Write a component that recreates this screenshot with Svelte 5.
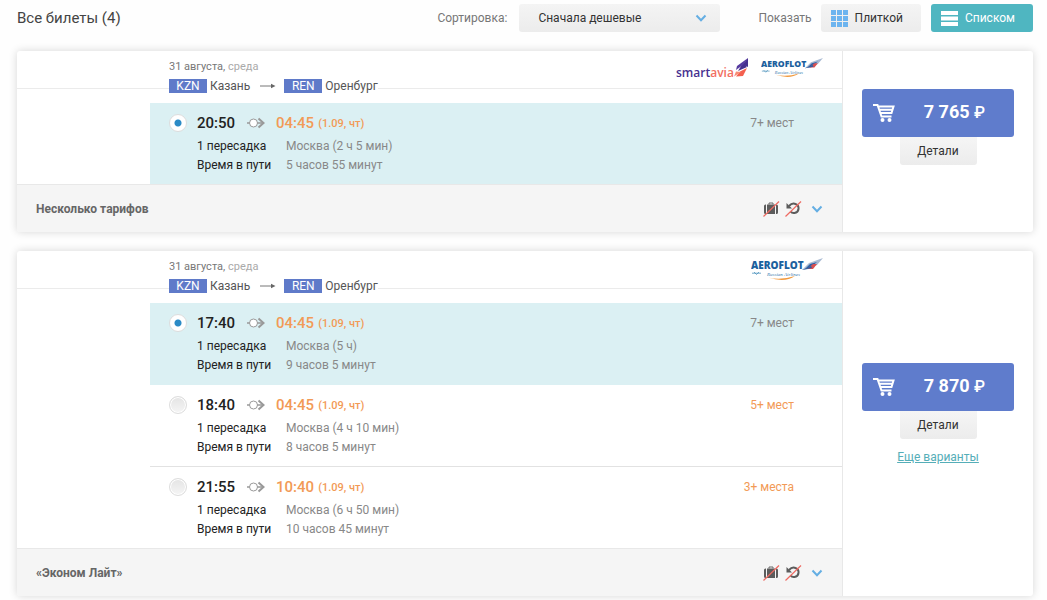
<script lang="ts">
  type Flight = {
    depart: string;
    arrive: string;
    stop: string;
    duration: string;
    seats: string;
    few?: boolean;
  };

  type Ticket = {
    id: number;
    airlines: string[];
    flights: Flight[];
    tariff: string;
    price: string;
    more?: boolean;
  };

  const tickets: Ticket[] = [
    {
      id: 1,
      airlines: ['smartavia', 'aeroflot'],
      flights: [
        { depart: '20:50', arrive: '04:45', stop: 'Москва (2 ч 5 мин)', duration: '5 часов 55 минут', seats: '7+ мест' }
      ],
      tariff: 'Несколько тарифов',
      price: '7 765'
    },
    {
      id: 2,
      airlines: ['aeroflot'],
      flights: [
        { depart: '17:40', arrive: '04:45', stop: 'Москва (5 ч)', duration: '9 часов 5 минут', seats: '7+ мест' },
        { depart: '18:40', arrive: '04:45', stop: 'Москва (4 ч 10 мин)', duration: '8 часов 5 минут', seats: '5+ мест', few: true },
        { depart: '21:55', arrive: '10:40', stop: 'Москва (6 ч 50 мин)', duration: '10 часов 45 минут', seats: '3+ места', few: true }
      ],
      tariff: '«Эконом Лайт»',
      price: '7 870',
      more: true
    }
  ];

  let selected: Record<number, number> = $state({ 1: 0, 2: 0 });
  let view = $state('list');
</script>

<div class="page">
  <header class="toolbar">
    <h1>Все билеты (4)</h1>
    <label class="caption" for="sort">Сортировка:</label>
    <div class="sort">
      <select id="sort">
        <option>Сначала дешевые</option>
        <option>Сначала быстрые</option>
      </select>
      <svg class="chevron" width="12" height="8" viewBox="0 0 12 8"><path d="M1.5 1.5 6 6.2l4.5-4.7" /></svg>
    </div>
    <span class="caption show">Показать</span>
    <button class="view" class:active={view === 'tile'} onclick={() => (view = 'tile')}>
      <svg width="17" height="17" viewBox="0 0 17 17" fill="currentColor">
        <path d="M0 0h5v5H0zM6 0h5v5H6zM12 0h5v5h-5zM0 6h5v5H0zM6 6h5v5H6zM12 6h5v5h-5zM0 12h5v5H0zM6 12h5v5H6zM12 12h5v5h-5z" />
      </svg>
      Плиткой
    </button>
    <button class="view" class:active={view === 'list'} onclick={() => (view = 'list')}>
      <svg width="17" height="17" viewBox="0 0 17 17" fill="currentColor">
        <path d="M0 1h17v4H0zM0 6.5h17v4H0zM0 12h17v4H0z" />
      </svg>
      Списком
    </button>
  </header>

  {#each tickets as ticket (ticket.id)}
    <article class="ticket">
      <div class="main">
        <div class="head">
          <div class="direction">
            <div class="date">31 августа, <span>среда</span></div>
            <div class="route">
              <b>KZN</b>Казань
              <svg width="16" height="6" viewBox="0 0 16 6"><path d="M0 3h13" stroke="#777" /><path d="M11 .8 15.5 3 11 5.2z" fill="#666" /></svg>
              <b>REN</b>Оренбург
            </div>
          </div>
          <div class="logos">
            {#each ticket.airlines as airline}
              {#if airline === 'smartavia'}
                <svg width="73" height="24" viewBox="0 0 73 24" role="img" aria-label="smartavia">
                  <text x="0" y="20" class="smart">smart<tspan fill="#f26f62">avia</tspan></text>
                  <path d="M72 1v9l-5-3zM67 6l4 4-9 4z" fill="#46308f" />
                  <path d="M72 1 61 9l-1 4 7-5z" fill="#563ba0" />
                  <path d="M71 11 67 19l-7 .5 4-5z" fill="#f4604f" />
                  <path d="m60 14.5 5 .5-7 4.5z" fill="#f88b74" />
                </svg>
              {:else}
                <svg
                  width={ticket.airlines.length > 1 ? 62 : 72}
                  height={ticket.airlines.length > 1 ? 21 : 24}
                  viewBox="0 0 72 24"
                  role="img"
                  aria-label="Aeroflot Russian Airlines"
                >
                  <text x="0" y="12" class="aero">AEROFLOT</text>
                  <text x="16" y="19" class="russian">Russian Airlines</text>
                  <path d="M1 16.200h9M3 15l2.500 2.500L8 15" fill="none" stroke="#4e94be" stroke-width=".8" />
                  <path d="M17 20.500q13 3 27-1.500-10 7-27 1.500z" fill="#f29a3e" />
                  <path d="M51 13 58 6l14-5-6 7-8 4z" fill="#a9bad2" />
                  <path d="m54 12 5-5 7-2-6 5z" fill="#2e62a8" />
                  <path d="m56 12 6-5h4l-4 5z" fill="#d84f50" />
                  <path d="m51 13 9-4 1 2z" fill="#315f9f" />
                </svg>
              {/if}
            {/each}
          </div>
        </div>

        <div class="flights">
          {#each ticket.flights as flight, i}
            <label class="flight" class:selected={selected[ticket.id] === i}>
              <input type="radio" name="flight-{ticket.id}" value={i} bind:group={selected[ticket.id]} />
              <span class="info">
                <span class="times">
                  <strong>{flight.depart}</strong>
                  <svg width="18" height="12" viewBox="0 0 18 12" fill="none" stroke="#999">
                    <path d="M0 6h17" stroke-width="1.500" />
                    <circle cx="6.500" cy="6" r="4" fill="#fff" />
                    <path d="m11.500 1.500 5 4.500-5 4.500" stroke-width="2" />
                  </svg>
                  <strong class="arrive">{flight.arrive}</strong>
                  <small>(1.09, чт)</small>
                </span>
                <span class="row"><span>1 пересадка</span><em>{flight.stop}</em></span>
                <span class="row"><span>Время в пути</span><em>{flight.duration}</em></span>
              </span>
              <span class="seats" class:few={flight.few}>{flight.seats}</span>
            </label>
          {/each}
        </div>

        <footer class="tariff">
          <b>{ticket.tariff}</b>
          <svg width="17" height="16" viewBox="0 0 17 16" role="img" aria-label="Без багажа">
            <path d="M6 3.500V2h4v1.500" fill="none" stroke="#666" />
            <path d="M2.500 3.500H3V13h-.5A1.500 1.500 0 0 1 1 11.500V5a1.500 1.500 0 0 1 1.500-1.500zM4 3.500h8V13H4zM13 3.500h.5A1.500 1.500 0 0 1 15 5v6.500a1.500 1.500 0 0 1-1.500 1.500H13z" fill="#5c5c5c" />
            <path d="M.5 15.500 16 .5" stroke="#ee6a62" stroke-width="1.200" />
          </svg>
          <svg width="17" height="16" viewBox="0 0 17 16" role="img" aria-label="Без возврата">
            <path d="M4 5C6 2.800 8.500 2.200 10.500 3a4.600 4.600 0 0 1-1 8.900c-1.500.2-3-.2-4-1.300" fill="none" stroke="#5c5c5c" stroke-width="2" />
            <path d="M1.500 2v5.500H7z" fill="#5c5c5c" />
            <path d="M.5 15.500 16 .5" stroke="#ee6a62" stroke-width="1.200" />
          </svg>
          <button class="expand" aria-label="Показать тарифы">
            <svg class="chevron" width="12" height="8" viewBox="0 0 12 8"><path d="M1.5 1.5 6 6.2l4.5-4.7" /></svg>
          </button>
        </footer>
      </div>

      <aside class="buy">
        <button class="price">
          <svg width="22" height="18" viewBox="0 0 22 18" fill="none" stroke="#fff" stroke-width="2">
            <path d="M0 1h4.500l4 11.500h10M5 2.500h15.500L18.500 9H7.500M6 5.700h13.500" />
            <circle cx="9.500" cy="16" r="1" /><circle cx="16.500" cy="16" r="1" />
          </svg>
          <span>{ticket.price} <span class="ruble">₽</span></span>
        </button>
        <button class="details">Детали</button>
        {#if ticket.more}
          <a href="#more">Еще варианты</a>
        {/if}
      </aside>
    </article>
  {/each}
</div>

<style>
  :global(body) {
    background: #fefefe;
  }

  .page {
    padding: 4px 14px 4px 17px;
    font-family: Roboto, "Liberation Sans", sans-serif;
    font-size: 12px;
    line-height: 16px;
    color: #333;
  }

  button,
  select {
    font: inherit;
    border: 0;
    cursor: pointer;
  }

  svg {
    flex: none;
  }

  .toolbar {
    display: flex;
    align-items: center;
    height: 28px;
    margin-bottom: 19px;
  }

  h1 {
    flex: 1;
    margin: 0;
    font-size: 15px;
    font-weight: 400;
    color: #444;
  }

  .caption {
    margin-right: 12px;
    color: #777;
  }

  .show {
    margin: 0 9px 0 38px;
  }

  .sort {
    position: relative;
    width: 201px;
  }

  select {
    appearance: none;
    width: 100%;
    height: 28px;
    padding: 0 36px 0 19px;
    border-radius: 3px;
    background: linear-gradient(#f4f4f4, #ececec);
    color: #333;
  }

  .chevron {
    fill: none;
    stroke: #64aee3;
    stroke-width: 2;
  }

  .sort .chevron {
    position: absolute;
    right: 13px;
    top: 10px;
    pointer-events: none;
  }

  .view {
    display: flex;
    align-items: center;
    gap: 7px;
    height: 28px;
    padding: 0 18px 0 10px;
    border-radius: 3px;
    background: linear-gradient(#f4f4f4, #ececec);
    color: #333;
  }

  .view svg {
    color: #6cb4ef;
  }

  .view + .view {
    margin-left: 10px;
  }

  .view.active {
    background: #4fb6c1;
    color: #fff;
  }

  .view.active svg {
    color: #fff;
  }

  .ticket {
    display: flex;
    margin-bottom: 19px;
    border-radius: 3px;
    background: #fff;
    box-shadow: 0 0 8px rgba(0, 0, 0, 0.16);
  }

  .main {
    flex: 1;
    border-right: 1px solid #e8e8e8;
  }

  .head {
    position: relative;
    display: flex;
    justify-content: space-between;
    height: 52px;
    padding: 0 19px 0 152px;
    box-sizing: border-box;
  }

  .head::before {
    content: '';
    position: absolute;
    top: 37px;
    left: 0;
    right: 0;
    border-top: 1px solid #ebebeb;
  }

  .direction {
    position: relative;
    padding-top: 8px;
  }

  .date {
    font-size: 11px;
    color: #777;
  }

  .date span {
    color: #aaa;
  }

  .route {
    display: flex;
    align-items: center;
    margin-top: 3px;
    background: #fff;
    color: #555;
  }

  .route b {
    width: 38px;
    margin-right: 3px;
    background: #5f7ac9;
    color: #fff;
    font-weight: 400;
    line-height: 14px;
    text-align: center;
  }

  .route svg {
    margin: 0 8px 0 10px;
  }

  .logos {
    display: flex;
    gap: 12px;
    padding-top: 6px;
  }

  .smart {
    font-family: "Open Sans", sans-serif;
    font-size: 12px;
    font-weight: 600;
    fill: #46308f;
  }

  .aero {
    font-family: "Open Sans", sans-serif;
    font-size: 10px;
    font-weight: 800;
    fill: #1b609d;
  }

  .russian {
    font-family: "Liberation Serif", serif;
    font-size: 5px;
    font-style: italic;
    fill: #3478ae;
  }

  .flights {
    margin-left: 133px;
  }

  .flight {
    display: flex;
    align-items: flex-start;
    height: 81px;
    padding: 0 48px 0 19px;
    box-sizing: border-box;
    cursor: pointer;
  }

  .flight + .flight {
    border-top: 1px solid #e2e2e2;
    height: 82px;
  }

  .flight.selected {
    background: #dbf0f3;
  }

  .flight.selected + .flight {
    border-color: #dbf0f3;
  }

  input {
    appearance: none;
    width: 18px;
    height: 18px;
    margin: 11px 10px 0 0;
    border: 1px solid #ddd;
    border-radius: 50%;
    background: linear-gradient(#e4e4e4, #f5f5f5);
    box-shadow: inset 0 0 0 1px #fff;
  }

  input:checked {
    background: radial-gradient(circle, #2b8bc6 3px, #fff 4px);
  }

  .info {
    flex: 1;
    display: flex;
    flex-direction: column;
  }

  .times {
    display: flex;
    align-items: center;
    height: 20px;
    margin: 10px 0 4px;
  }

  .times strong {
    font-size: 15px;
    font-weight: 500;
    color: #222;
  }

  .times svg {
    margin: 0 11px 0 12px;
  }

  .times .arrive,
  .times small {
    color: #f29a56;
  }

  .times small {
    margin: 2px 0 0 4px;
    font-size: 11px;
    font-weight: 500;
  }

  .row {
    display: flex;
    line-height: 19px;
    color: #222;
  }

  .row span {
    width: 89px;
  }

  .row em {
    font-style: normal;
    color: #888;
  }

  .seats {
    margin-top: 12px;
    color: #888;
  }

  .seats.few {
    color: #f29a56;
  }

  .tariff {
    display: flex;
    align-items: center;
    gap: 5px;
    height: 48px;
    padding: 0 19px;
    box-sizing: border-box;
    border-top: 1px solid #e8e8e8;
    border-radius: 0 0 0 3px;
    background: #f5f5f5;
  }

  .tariff b {
    flex: 1;
    color: #666;
  }

  .expand {
    display: flex;
    padding: 4px 0 4px 4px;
    background: none;
  }

  .buy {
    display: flex;
    flex-direction: column;
    align-items: center;
    justify-content: center;
    width: 190px;
    padding: 0 19px 20px;
    box-sizing: border-box;
  }

  .price {
    display: flex;
    align-items: center;
    justify-content: space-between;
    width: 100%;
    height: 48px;
    padding: 0 29px 0 11px;
    border-radius: 3px;
    background: #5f7ccc;
    color: #fff;
    font-size: 18px;
    font-weight: 700;
  }

  .ruble {
    font-size: 16px;
    font-weight: 500;
  }

  .details {
    width: 77px;
    height: 28px;
    margin-bottom: 10px;
    border-radius: 0 0 3px 3px;
    background: linear-gradient(#f5f5f5, #ececec);
    color: #333;
  }

  .buy a {
    color: #55aeb8;
  }
</style>
